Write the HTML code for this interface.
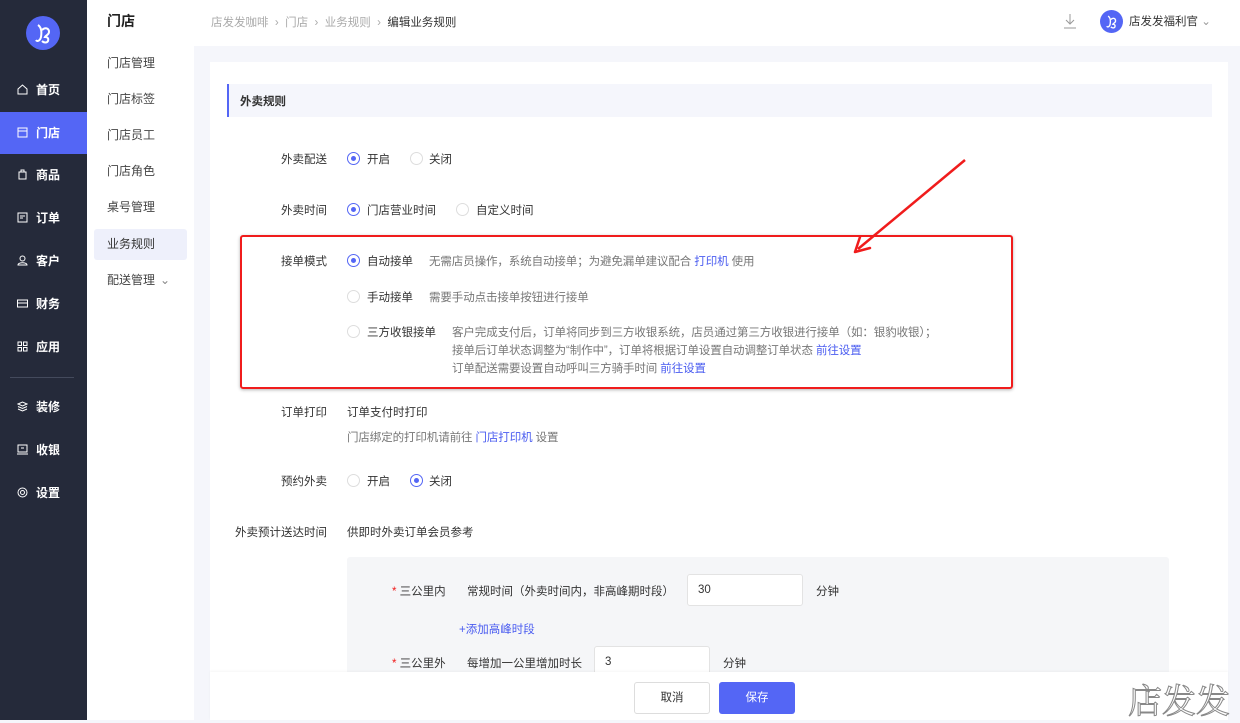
<!DOCTYPE html>
<html><head><meta charset="utf-8"><style>
*{box-sizing:border-box;margin:0;padding:0}
body{width:1240px;height:720px;overflow:hidden;position:relative;background:#f5f6fb;font-family:"Liberation Sans","Noto Sans CJK SC",sans-serif;font-size:11.5px;color:#333}
.a{position:absolute;white-space:nowrap}
#sb{left:0;top:0;width:87px;height:720px;background:#252a3a}
.nav{position:absolute;left:0;width:87px;height:42px;color:#fff;font-size:12px;line-height:42px;padding-left:17px;font-weight:bold}
.nav svg{position:absolute;left:17px;top:15px}
.nav span{margin-left:19px}
#sub{left:87px;top:0;width:107px;height:720px;background:#fff}
.si{position:absolute;left:7px;width:93px;height:31px;line-height:31px;padding-left:13px;color:#444;font-size:12px}
#hd{left:194px;top:0;width:1046px;height:46px;background:#fff}
.r{position:absolute;width:13px;height:13px;border-radius:50%;border:1px solid #ddd;background:#fff}
.r.on{border-color:#5466f5}
.r.on::after{content:"";position:absolute;left:3px;top:3px;width:5px;height:5px;border-radius:50%;background:#5466f5}
.lb{color:#333}
.g{color:#777;letter-spacing:-0.1px}
.b{color:#4a5cf0}
.inp{position:absolute;background:#fff;border:1px solid #e3e3e3;border-radius:3px;height:32px;line-height:30px;padding-left:10px}
</style></head><body>
<div class="a" id="sb">
 <svg class="a" style="left:26px;top:16px" width="34" height="34" viewBox="0 0 34 34"><circle cx="17" cy="17" r="17" fill="#5466f5"/><path d="M12 9c3 2 4 6 3 12-1 4-4 5-5 3M16 14c3-3 7-2 7 2 0 3-3 3-4 5 2 0 4 1 3 4-1 2-4 2-6 0" stroke="#fff" stroke-width="2" fill="none"/></svg>
 <div class="nav" style="top:69px"><svg width="11" height="11" viewBox="0 0 11 11"><path d="M1 5L5.5 1 10 5V10H1Z" fill="none" stroke="#fff"/></svg><span>首页</span></div>
 <div class="nav" style="top:112px;background:#5466f5"><svg width="11" height="11" viewBox="0 0 11 11"><rect x="1" y="1" width="9" height="9" fill="none" stroke="#fff"/><path d="M1 4H10" stroke="#fff"/></svg><span>门店</span></div>
 <div class="nav" style="top:154px"><svg width="11" height="11" viewBox="0 0 11 11"><path d="M2 3H9V10H2Z M4 3V1H7V3" fill="none" stroke="#fff"/></svg><span>商品</span></div>
 <div class="nav" style="top:197px"><svg width="11" height="11" viewBox="0 0 11 11"><rect x="1" y="1" width="9" height="9" fill="none" stroke="#fff"/><path d="M3 4H8M3 6H6" stroke="#fff"/></svg><span>订单</span></div>
 <div class="nav" style="top:240px"><svg width="11" height="11" viewBox="0 0 11 11"><circle cx="5.5" cy="3.5" r="2.5" fill="none" stroke="#fff"/><path d="M1 10C1 7 10 7 10 10Z" fill="none" stroke="#fff"/></svg><span>客户</span></div>
 <div class="nav" style="top:283px"><svg width="11" height="11" viewBox="0 0 11 11"><rect x="0.5" y="2" width="10" height="7" fill="none" stroke="#fff"/><path d="M1 5H10" stroke="#fff"/></svg><span>财务</span></div>
 <div class="nav" style="top:326px"><svg width="11" height="11" viewBox="0 0 11 11"><rect x="1" y="1" width="3.5" height="3.5" fill="none" stroke="#fff"/><rect x="6.5" y="1" width="3.5" height="3.5" fill="none" stroke="#fff"/><rect x="1" y="6.5" width="3.5" height="3.5" fill="none" stroke="#fff"/><rect x="6.5" y="6.5" width="3.5" height="3.5" fill="none" stroke="#fff"/></svg><span>应用</span></div>
 <div class="a" style="left:10px;top:377px;width:64px;height:1px;background:#444a5c"></div>
 <div class="nav" style="top:386px"><svg width="11" height="11" viewBox="0 0 11 11"><path d="M1 3L5.5 1 10 3 5.5 5Z M1 5.5L5.5 7.5 10 5.5M1 8L5.5 10 10 8" fill="none" stroke="#fff"/></svg><span>装修</span></div>
 <div class="nav" style="top:429px"><svg width="11" height="11" viewBox="0 0 11 11"><rect x="1" y="1" width="9" height="7" fill="none" stroke="#fff"/><path d="M0 10H11M4 4H7" stroke="#fff"/></svg><span>收银</span></div>
 <div class="nav" style="top:472px"><svg width="11" height="11" viewBox="0 0 11 11"><circle cx="5.5" cy="5.5" r="4.5" fill="none" stroke="#fff"/><circle cx="5.5" cy="5.5" r="2" fill="none" stroke="#fff"/></svg><span>设置</span></div>
</div>
<div class="a" id="sub">
 <div class="a" style="left:20px;top:11px;font-size:14px;font-weight:bold;color:#222">门店</div>
 <div class="si" style="top:48px">门店管理</div>
 <div class="si" style="top:84px">门店标签</div>
 <div class="si" style="top:120px">门店员工</div>
 <div class="si" style="top:156px">门店角色</div>
 <div class="si" style="top:192px">桌号管理</div>
 <div class="si" style="top:229px;background:#eef0fb;border-radius:3px;color:#333">业务规则</div>
 <div class="si" style="top:265px">配送管理 <span style="position:absolute;left:66px;color:#888">&#8964;</span></div>
</div>
<div class="a" id="hd">
 <div class="a" style="left:17px;top:14px;color:#aaa">店发发咖啡 &nbsp;›&nbsp; 门店 &nbsp;›&nbsp; 业务规则 &nbsp;›&nbsp; <span style="color:#333">编辑业务规则</span></div>
 <svg class="a" style="left:869px;top:13px" width="14" height="16" viewBox="0 0 14 16"><path d="M7 1V11M3 7L7 11 11 7M1 15H13" fill="none" stroke="#999"/></svg>
 <svg class="a" style="left:906px;top:10px" width="23" height="23" viewBox="0 0 34 34"><circle cx="17" cy="17" r="17" fill="#5466f5"/><path d="M12 9c3 2 4 6 3 12-1 4-4 5-5 3M16 14c3-3 7-2 7 2 0 3-3 3-4 5 2 0 4 1 3 4-1 2-4 2-6 0" stroke="#fff" stroke-width="2" fill="none"/></svg>
 <div class="a" style="left:935px;top:13px;color:#333">店发发福利官 <span style="color:#999">⌄</span></div>
</div>
<div class="a" style="left:210px;top:62px;width:1018px;height:658px;background:#fff"></div>
<div class="a" style="left:227px;top:84px;width:985px;height:33px;background:#f5f6fc;border-left:2px solid #5466f5"></div>
<div class="a" style="left:240px;top:93px;font-weight:bold;color:#333">外卖规则</div>

<div class="a lb" style="left:281px;top:151px">外卖配送</div>
<div class="r on" style="left:347px;top:152px"></div><div class="a" style="left:367px;top:151px">开启</div>
<div class="r" style="left:410px;top:152px"></div><div class="a" style="left:429px;top:151px">关闭</div>

<div class="a lb" style="left:281px;top:202px">外卖时间</div>
<div class="r on" style="left:347px;top:203px"></div><div class="a" style="left:367px;top:202px">门店营业时间</div>
<div class="r" style="left:456px;top:203px"></div><div class="a" style="left:476px;top:202px">自定义时间</div>

<div class="a lb" style="left:281px;top:253px">接单模式</div>
<div class="r on" style="left:347px;top:254px"></div><div class="a" style="left:367px;top:253px">自动接单</div>
<div class="a g" style="left:429px;top:253px">无需店员操作，系统自动接单；为避免漏单建议配合 <span class="b">打印机</span> 使用</div>
<div class="r" style="left:347px;top:290px"></div><div class="a" style="left:367px;top:289px">手动接单</div>
<div class="a g" style="left:429px;top:289px">需要手动点击接单按钮进行接单</div>
<div class="r" style="left:347px;top:325px"></div><div class="a" style="left:367px;top:324px">三方收银接单</div>
<div class="a g" style="left:452px;top:324px;line-height:18px">客户完成支付后，订单将同步到三方收银系统，店员通过第三方收银进行接单（如：银豹收银）；<br>接单后订单状态调整为“制作中”，订单将根据订单设置自动调整订单状态 <span class="b">前往设置</span><br>订单配送需要设置自动呼叫三方骑手时间 <span class="b">前往设置</span></div>

<div class="a" style="left:240px;top:235px;width:773px;height:154px;border:2px solid #f01c1c;border-radius:3px;box-shadow:0 1px 3px rgba(0,0,0,.3)"></div>
<svg class="a" style="left:850px;top:155px" width="120" height="100" viewBox="0 0 120 100"><path d="M115 5L8 94" stroke="#f01c1c" stroke-width="2.5"/><path d="M5 97L20 93M5 97L10 82" stroke="#f01c1c" stroke-width="2.5" stroke-linecap="round"/></svg>

<div class="a lb" style="left:281px;top:404px">订单打印</div>
<div class="a" style="left:347px;top:404px">订单支付时打印</div>
<div class="a g" style="left:347px;top:429px">门店绑定的打印机请前往 <span class="b">门店打印机</span> 设置</div>

<div class="a lb" style="left:281px;top:473px">预约外卖</div>
<div class="r" style="left:347px;top:474px"></div><div class="a" style="left:367px;top:473px">开启</div>
<div class="r on" style="left:410px;top:474px"></div><div class="a" style="left:429px;top:473px">关闭</div>

<div class="a lb" style="left:235px;top:524px">外卖预计送达时间</div>
<div class="a" style="left:347px;top:524px">供即时外卖订单会员参考</div>

<div class="a" style="left:347px;top:557px;width:822px;height:163px;background:#f5f6f8;border-radius:3px"></div>
<div class="a" style="left:392px;top:583px"><span style="color:#f01c1c">*</span> 三公里内</div>
<div class="a" style="left:467px;top:583px">常规时间（外卖时间内，非高峰期时段）</div>
<div class="inp" style="left:687px;top:574px;width:116px">30</div>
<div class="a" style="left:816px;top:583px">分钟</div>
<div class="a b" style="left:459px;top:621px">+添加高峰时段</div>
<div class="a" style="left:392px;top:655px"><span style="color:#f01c1c">*</span> 三公里外</div>
<div class="a" style="left:467px;top:655px">每增加一公里增加时长</div>
<div class="inp" style="left:594px;top:646px;width:116px">3</div>
<div class="a" style="left:723px;top:655px">分钟</div>

<div class="a" style="left:210px;top:672px;width:1018px;height:48px;background:#fff;box-shadow:0 -1px 2px rgba(0,0,0,.04)"></div>
<div class="a" style="left:634px;top:682px;width:76px;height:32px;border:1px solid #ddd;border-radius:3px;background:#fff;text-align:center;line-height:30px">取消</div>
<div class="a" style="left:719px;top:682px;width:76px;height:32px;border-radius:3px;background:#5466f5;color:#fff;text-align:center;line-height:32px">保存</div>
<div class="a" style="left:1128px;top:674px;font-size:34px;color:#fff;-webkit-text-stroke:1px #888;font-family:'Noto Serif CJK SC',serif">店发发</div>
</body></html>
